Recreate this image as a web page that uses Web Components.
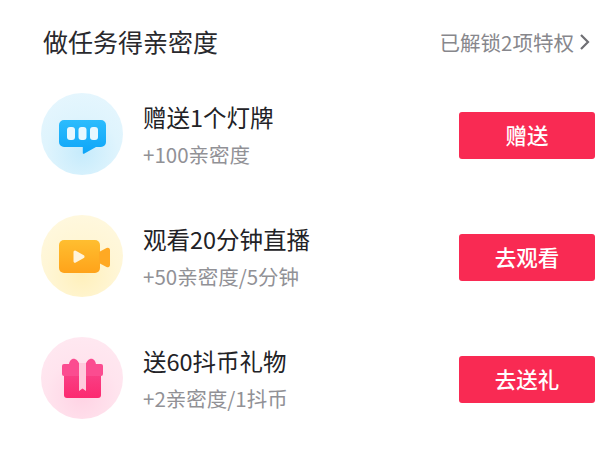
<!DOCTYPE html>
<html lang="zh">
<head>
<meta charset="utf-8">
<title>亲密度</title>
<style>
  html, body { margin: 0; background: #fff; }
  body { width: 600px; height: 458px; overflow: hidden; font-family: "Noto Sans CJK SC", "Noto Sans", sans-serif; }
</style>
</head>
<body>
<task-panel>
  <span slot="title">做任务得亲密度</span>
  <span slot="link">已解锁2项特权</span>
  <task-row label="赠送1个灯牌" note="+100亲密度" action="赠送" kind="lamp"></task-row>
  <task-row label="观看20分钟直播" note="+50亲密度/5分钟" action="去观看" kind="video"></task-row>
  <task-row label="送60抖币礼物" note="+2亲密度/1抖币" action="去送礼" kind="gift"></task-row>
</task-panel>

<script>
const ICONS = {
  lamp: `<svg width="47" height="34" viewBox="0 0 47 34">
    <defs><linearGradient id="b" x1="0" y1="0" x2="0" y2="1"><stop offset="0" stop-color="#2cbcfd"/><stop offset="1" stop-color="#0ea5f8"/></linearGradient></defs>
    <path fill="url(#b)" d="M5 0h37a5 5 0 0 1 5 5v17a5 5 0 0 1-5 5H37l-12 6.700a.8.8 0 0 1-1.200-.7V27H5a5 5 0 0 1-5-5V5a5 5 0 0 1 5-5z"/>
    <rect x="8" y="7" width="8" height="13" rx="3" fill="#e8f8ff"/>
    <rect x="19.500" y="7" width="8" height="13" rx="3" fill="#e8f8ff"/>
    <rect x="31" y="7" width="8" height="13" rx="3" fill="#e8f8ff"/>
  </svg>`,
  video: `<svg width="51" height="33" viewBox="0 0 51 33">
    <defs><linearGradient id="v" x1="0" y1="0" x2="0" y2="1"><stop offset="0" stop-color="#ffbe30"/><stop offset="1" stop-color="#ffa31a"/></linearGradient></defs>
    <rect x="0" y="0" width="41" height="33" rx="5" fill="url(#v)"/>
    <path fill="#ffa923" d="M40 12l7.500-4a2.300 2.300 0 0 1 3.500 1.900v15.200a2.300 2.300 0 0 1-3.500 1.900L40 23z"/>
    <path fill="#fff4dc" d="M14.500 12a1.500 1.500 0 0 1 2.300-1.300l8 4.600a1.600 1.600 0 0 1 0 2.700l-8 4.600a1.500 1.500 0 0 1-2.300-1.300z"/>
  </svg>`,
  gift: `<svg width="41" height="40" viewBox="0 0 41 40">
    <defs><linearGradient id="g" x1="0" y1="0" x2="0" y2="1"><stop offset="0" stop-color="#f93f85"/><stop offset="1" stop-color="#fc2a70"/></linearGradient></defs>
    <path fill="#fb4c90" d="M7 7c0-4 3-7 6-6 2 .5 4 3 5 7h-11z"/>
    <path fill="#fb4c90" d="M34 7c0-4-3-7-6-6-2 .5-4 3-5 7h11z"/>
    <path fill="url(#g)" d="M2 16h37v21a3 3 0 0 1-3 3H5a3 3 0 0 1-3-3z"/>
    <path fill="#fb4c90" d="M2 6h37a2 2 0 0 1 2 2v8a2 2 0 0 1-2 2h-37a2 2 0 0 1-2-2V8a2 2 0 0 1 2-2z"/>
    <path fill="#ffcadd" d="M17 5h7v28l-3.500-2.500L17 33z"/>
  </svg>`
};

class BadgeIcon extends HTMLElement {
  constructor() {
    super();
    const kind = this.getAttribute('kind');
    const shadow = this.attachShadow({mode: 'open'});
    shadow.innerHTML = `<style>
    :host {
      display: flex;
      align-items: center;
      justify-content: center;
      flex: none;
      width: 82px;
      height: 82px;
      border-radius: 50%;
    }
    :host([kind="lamp"]) { background: radial-gradient(circle at 50% 72%, #c6ebfc 0, #dff4fd 50%, #e8f7fe 100%); }
    :host([kind="video"]) { background: radial-gradient(circle at 50% 72%, #fff0bb 0, #fff6d6 50%, #fff9e2 100%); }
    :host([kind="gift"]) { background: radial-gradient(circle at 50% 72%, #ffd3e4 0, #ffe4ee 50%, #ffeaf2 100%); }
    svg { display: block; }
    :host([kind="lamp"]) svg { margin-top: 5px; }
    :host([kind="video"]) svg { margin-left: 5px; }
    :host([kind="gift"]) svg { margin-top: -1px; }
    </style>${ICONS[kind]}`;
  }
}
customElements.define('badge-icon', BadgeIcon);

class ActionButton extends HTMLElement {
  constructor() {
    super();
    const shadow = this.attachShadow({mode: 'open'});
    shadow.innerHTML = `<style>
    :host {
      display: flex;
      align-items: center;
      justify-content: center;
      flex: none;
      width: 136px;
      height: 47px;
      margin-top: 3px;
      border-radius: 3px;
      background: #f92a53;
      color: #fff;
      font-size: 21.500px;
      font-weight: 500;
    }
    span { margin-top: -3px; }
    </style><span><slot></slot></span>`;
  }
}
customElements.define('action-button', ActionButton);

class TaskRow extends HTMLElement {
  constructor() {
    super();
    const shadow = this.attachShadow({mode: 'open'});
    shadow.innerHTML = `<style>
    :host {
      display: flex;
      align-items: center;
      height: 82px;
    }
    .text {
      flex: 1;
      margin-left: 20px;
      display: flex;
      flex-direction: column;
      gap: 7px;
    }
    .label {
      font-size: 23.500px;
      line-height: 32px;
      color: #222226;
    }
    .note {
      font-size: 20.500px;
      line-height: 28px;
      color: #919196;
    }
    </style>
    <badge-icon kind="${this.getAttribute('kind')}"></badge-icon>
    <div class="text">
      <div class="label">${this.getAttribute('label')}</div>
      <div class="note">${this.getAttribute('note')}</div>
    </div>
    <action-button>${this.getAttribute('action')}</action-button>`;
  }
}
customElements.define('task-row', TaskRow);

class TaskPanel extends HTMLElement {
  constructor() {
    super();
    const shadow = this.attachShadow({mode: 'open'});
    shadow.innerHTML = `<style>
    :host {
      display: block;
      padding: 22px 5px 0 41px;
    }
    header {
      display: flex;
      align-items: center;
      justify-content: space-between;
      height: 40px;
      margin-bottom: 31px;
    }
    .title {
      margin-left: 2px;
      font-size: 25px;
      margin-top: -2px;
      color: #29292d;
    }
    .link {
      display: flex;
      align-items: center;
      gap: 5px;
      margin-right: 5px;
      font-size: 20.500px;
      color: #87878c;
    }
    .rows {
      display: flex;
      flex-direction: column;
      gap: 40px;
    }
    svg { display: block; }
    </style>
    <header>
      <div class="title"><slot name="title"></slot></div>
      <div class="link">
        <slot name="link"></slot>
        <svg width="11" height="18" viewBox="0 0 11 18"><path d="M2 2l7 7-7 7" fill="none" stroke="#6f6f74" stroke-width="2.200"/></svg>
      </div>
    </header>
    <div class="rows"><slot></slot></div>`;
  }
}
customElements.define('task-panel', TaskPanel);
</script>
</body>
</html>
